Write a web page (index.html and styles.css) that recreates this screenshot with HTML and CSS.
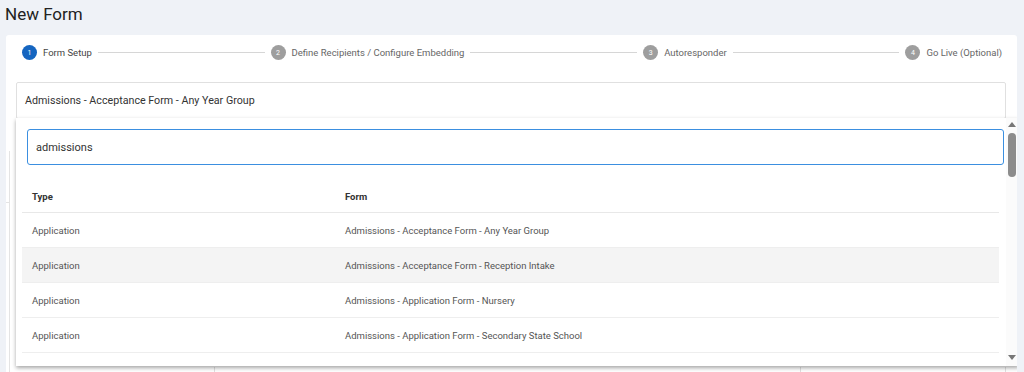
FILE: index.html
```html
<!DOCTYPE html>
<html lang="en">
<head>
    <meta charset="UTF-8">
    <meta name="viewport" content="width=device-width, initial-scale=1.0">
    <title>New Form</title>
    <link rel="stylesheet" href="styles.css">
</head>
<body>
    <h1 class="page-title">New Form</h1>
    <div class="card">
        <div class="stepper">
            <div class="step active"><span class="step-num">1</span><span class="step-label">Form Setup</span></div>
            <div class="step-line"></div>
            <div class="step"><span class="step-num">2</span><span class="step-label">Define Recipients / Configure Embedding</span></div>
            <div class="step-line"></div>
            <div class="step"><span class="step-num">3</span><span class="step-label">Autoresponder</span></div>
            <div class="step-line"></div>
            <div class="step"><span class="step-num">4</span><span class="step-label">Go Live (Optional)</span></div>
        </div>
        <div class="select-box">Admissions - Acceptance Form - Any Year Group</div>
        <div class="behind">
            <div class="behind-side"><div class="behind-top"></div></div>
            <div class="behind-main">
                <div class="behind-col"></div>
                <div class="behind-col wide"></div>
                <div class="behind-col"></div>
            </div>
        </div>

        <div class="dropdown">
            <div class="dropdown-body">
                <input class="search" type="text" value="admissions">
                <table class="results">
                    <thead>
                        <tr><th class="col-type">Type</th><th>Form</th></tr>
                    </thead>
                    <tbody>
                        <tr><td>Application</td><td>Admissions - Acceptance Form - Any Year Group</td></tr>
                        <tr class="hover"><td>Application</td><td>Admissions - Acceptance Form - Reception Intake</td></tr>
                        <tr><td>Application</td><td>Admissions - Application Form - Nursery</td></tr>
                        <tr><td>Application</td><td>Admissions - Application Form - Secondary State School</td></tr>
                        <tr><td></td><td></td></tr>
                    </tbody>
                </table>
            </div>
            <div class="scrollbar">
                <span class="arrow up"></span>
                <span class="thumb"></span>
                <span class="arrow down"></span>
            </div>
        </div>
    </div>
</body>
</html>
```

FILE: styles.css
```css
body {
    margin: 0;
    height: 372px;
    background-color: #EFF2F7;
    font-family: Roboto, "Liberation Sans", sans-serif;
    color: #333;
    overflow: hidden;
}
.page-title {
    margin: 0;
    padding: 4px 5px 0;
    height: 31px;
    font-size: 17px;
    font-weight: 400;
    color: #222;
}
.card {
    position: relative;
    margin: 0 7px 0 6px;
    padding: 10px 11px 0 10px;
    height: 327px;
    overflow: hidden;
    background-color: white;
    border-radius: 3px 3px 0 0;
}
.stepper {
    display: flex;
    align-items: center;
    height: 15px;
    padding: 0 4px 0 6px;
}
.step {
    display: flex;
    align-items: center;
    gap: 6px;
    font-size: 9.5px;
    color: #666;
    white-space: nowrap;
}
.step-num {
    width: 15px;
    height: 15px;
    border-radius: 50%;
    background-color: #9E9E9E;
    color: white;
    font-size: 7px;
    display: flex;
    align-items: center;
    justify-content: center;
}
.step.active .step-num {
    background-color: #1565C0;
}
.step.active .step-label {
    color: #444;
}
.step-line {
    flex: 1;
    height: 1px;
    background-color: #D6D6D6;
    margin: 0 6px;
}
.select-box {
    margin-top: 22px;
    height: 35px;
    border: 1px solid #E0E0E0;
    border-radius: 2px;
    display: flex;
    align-items: center;
    padding-left: 8px;
    font-size: 10.7px;
    color: #333;
}
.behind {
    display: flex;
    height: 260px;
}
.behind-side {
    width: 9px;
    margin-left: -10px;
    margin-top: 32px;
    border-right: 1px solid #E4E4E4;
}
.behind-top {
    height: 51px;
    border-bottom: 1px solid #E4E4E4;
}
.behind-main {
    flex: 1;
    display: flex;
    margin-top: 248px;
}
.behind-col {
    width: 204px;
    border-right: 1px solid #E0E0E0;
}
.behind-col.wide {
    width: 585px;
}
.dropdown {
    position: absolute;
    left: 10px;
    top: 83px;
    width: 1003px;
    height: 248px;
    background-color: white;
    box-shadow: 0 2px 4px rgba(0, 0, 0, 0.35);
    display: flex;
    overflow: hidden;
}
.dropdown-body {
    flex: 1;
    padding: 11px 2px 0 6px;
    overflow: hidden;
}
.search {
    display: block;
    box-sizing: border-box;
    width: 977px;
    height: 36px;
    margin-left: 5px;
    padding: 0 8px;
    border: 1px solid #3B8FE0;
    border-radius: 3px;
    font-family: Roboto, "Liberation Sans", sans-serif;
    font-size: 11px;
    color: #333;
    outline: none;
}
.results {
    width: 977px;
    margin-top: 16px;
    border-collapse: collapse;
    font-size: 9.5px;
    color: #555;
}
.results th {
    text-align: left;
    font-weight: bold;
    color: #333;
    height: 31px;
    padding: 0 10px;
    border-bottom: 1px solid #E8E8E8;
}
.results .col-type {
    width: 293px;
}
.results td {
    height: 34px;
    padding: 0 10px;
    border-bottom: 1px solid #EEEEEE;
}
.results tr.hover td {
    background-color: #F4F4F4;
}
.scrollbar {
    width: 13px;
    position: relative;
    background-color: #FBFBFB;
}
.thumb {
    position: absolute;
    left: 2px;
    top: 15px;
    width: 8px;
    height: 44px;
    border-radius: 4px;
    background-color: #8C8C8C;
}
.arrow {
    position: absolute;
    left: 2px;
    width: 0;
    height: 0;
    border-left: 4px solid transparent;
    border-right: 4px solid transparent;
}
.arrow.up {
    top: 4px;
    border-bottom: 5px solid #777;
}
.arrow.down {
    bottom: 6px;
    border-top: 5px solid #777;
}
```
